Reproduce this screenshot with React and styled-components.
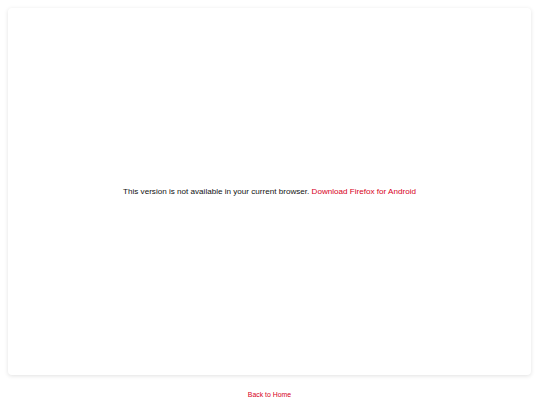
import React from 'react';
import styled, { createGlobalStyle } from 'styled-components';

const GlobalStyle = createGlobalStyle`
  html, body {
    margin: 0;
    padding: 0;
    background: #ffffff;
  }

  body {
    font-family: "Liberation Sans", Arial, sans-serif;
    color: #111111;
  }
`;

const Page = styled.div`
  padding: 8px 9px 0 8px;
  display: flex;
  flex-direction: column;
`;

const Card = styled.main`
  height: 367px;
  background: #ffffff;
  border-radius: 4px;
  box-shadow: 0 1px 4px rgba(0, 0, 0, 0.12);
  display: flex;
  align-items: center;
  justify-content: center;
`;

const Message = styled.p`
  margin: 1px 0 0;
  font-size: 8.1px;
  line-height: 1.2;
  color: #111111;
`;

const Link = styled.a`
  color: #d70022;
  text-decoration: none;
  font-size: ${(p) => p.$size || 'inherit'};
`;

const Footer = styled.footer`
  display: flex;
  justify-content: center;
  padding-top: 16px;
`;

export default function App() {
  return (
    <>
      <GlobalStyle />
      <Page>
        <Card>
          <Message>
            This version is not available in your current browser.{' '}
            <Link href="#">Download Firefox for Android</Link>
          </Message>
        </Card>
        <Footer>
          <Link href="#" $size="6.9px">Back to Home</Link>
        </Footer>
      </Page>
    </>
  );
}
